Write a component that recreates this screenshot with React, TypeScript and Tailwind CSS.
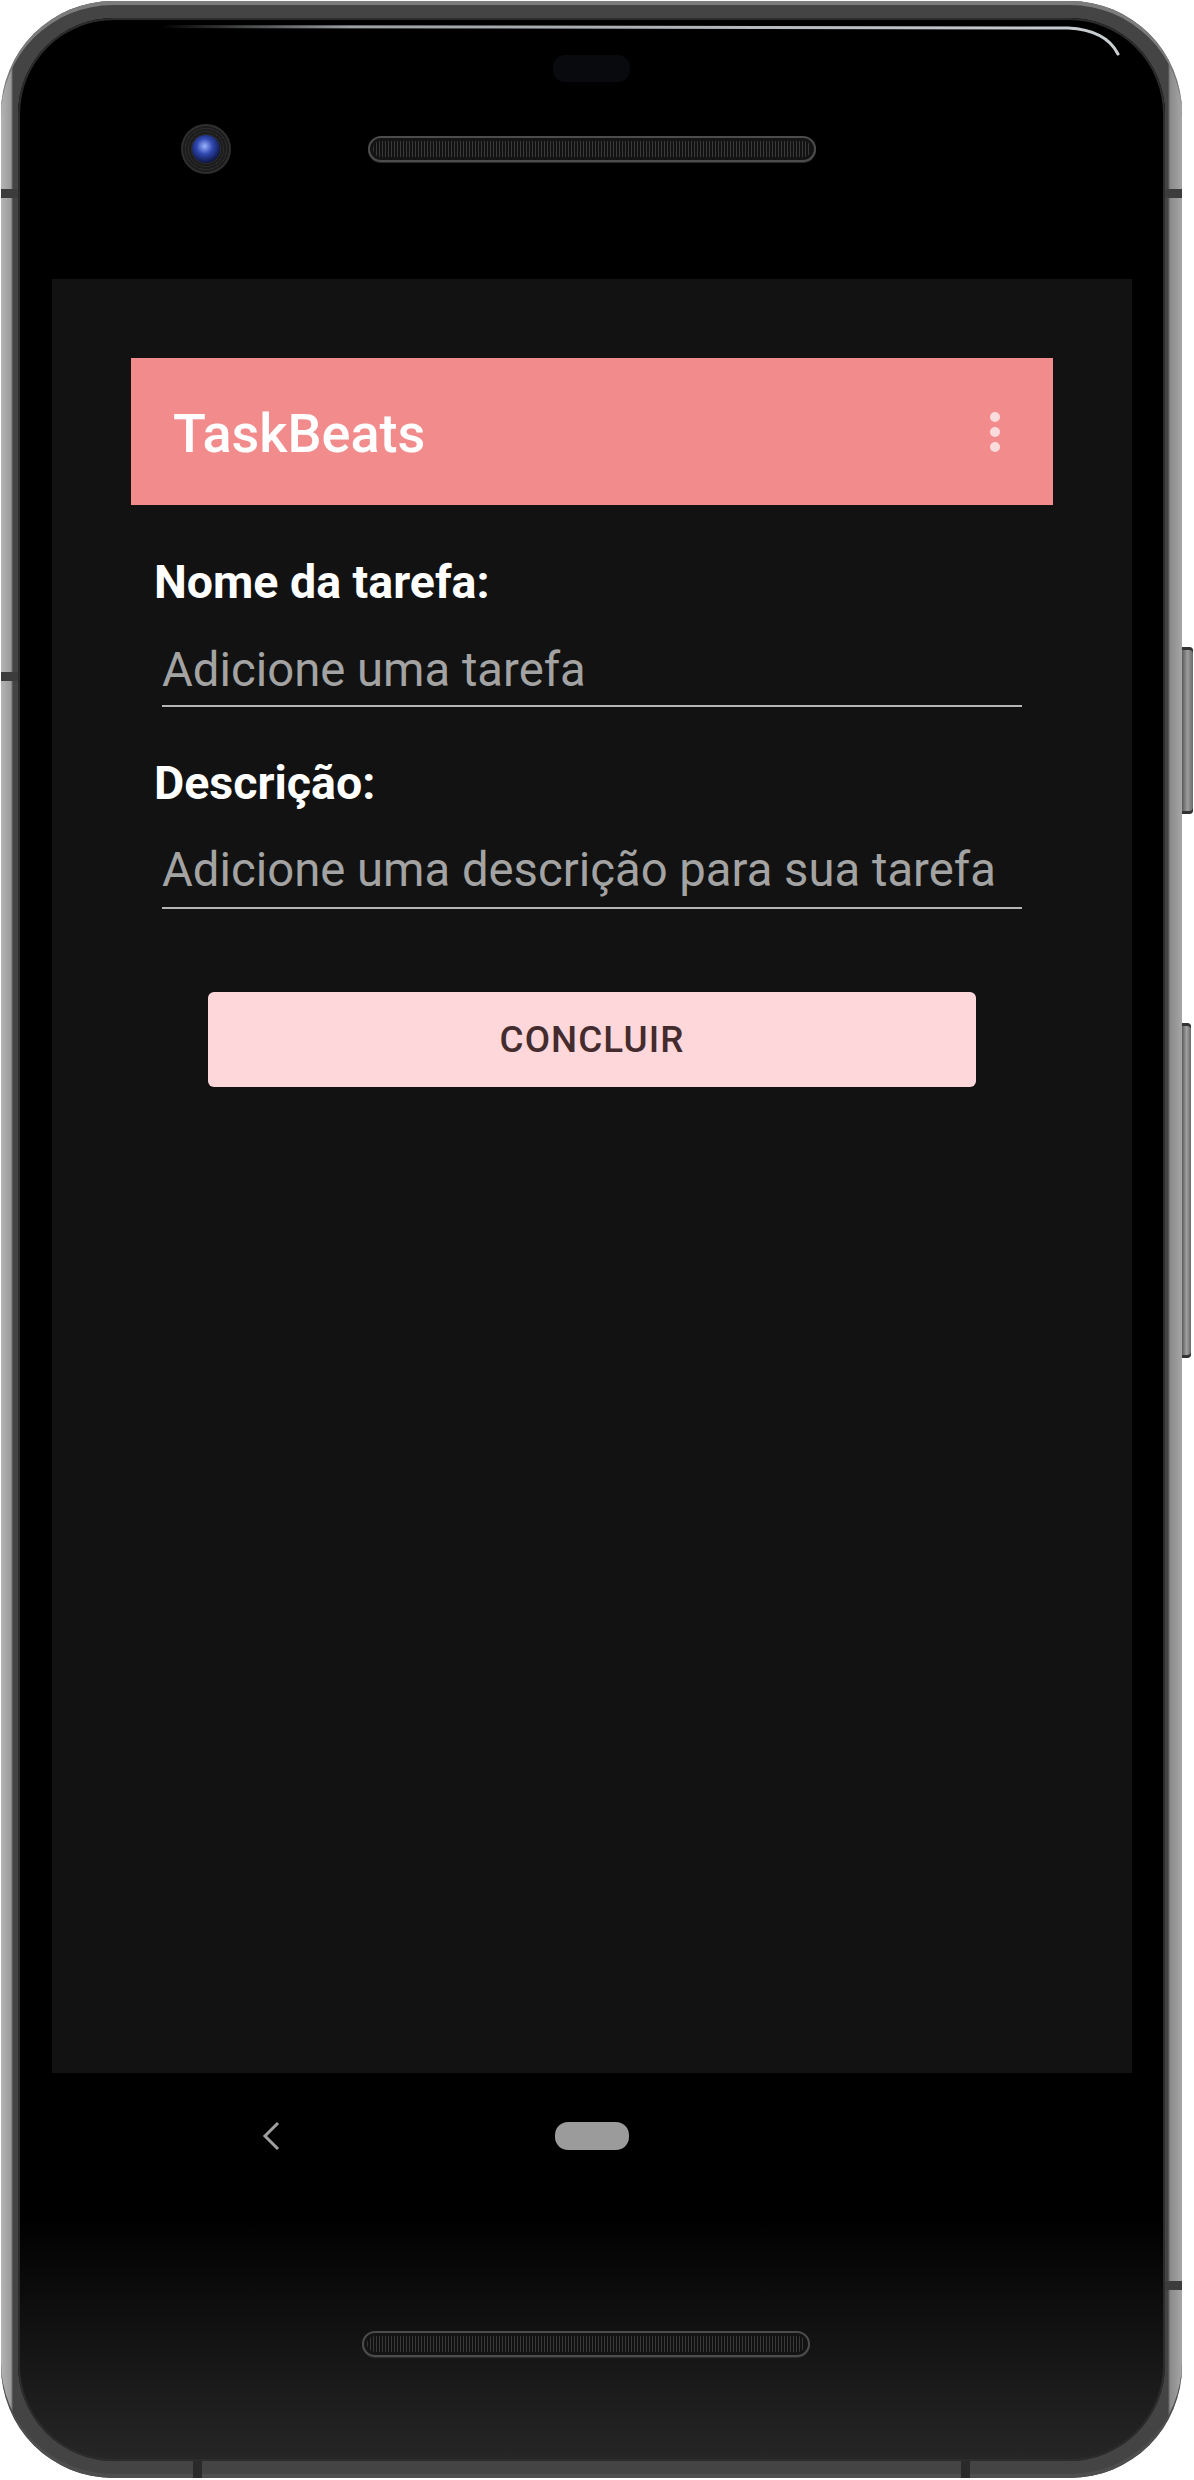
import React from 'react'

const Dot = () => <span className="block w-[10px] h-[10px] rounded-full bg-[#fbdcdc]" />

const Speaker = ({ className }: { className: string }) => (
  <div
    className={`h-[26px] w-[448px] rounded-full border-2 border-[#4c4c4c] bg-[#141414] p-[3px] shadow-[0_1px_0_#2a2a2a] ${className}`}
  >
    <div className="h-full w-full rounded-full bg-[repeating-linear-gradient(90deg,#3a3a3a_0px,#3a3a3a_1px,#121212_1px,#121212_3px)]" />
  </div>
)

export default function App() {
  return (
    <div className="w-[1194px] h-[2480px] bg-white overflow-hidden font-['Roboto',sans-serif]">
      <div className="flex pt-[1px] pl-[1px]">
        {/* phone body */}
        <div className="relative w-[1181px] h-[2477px] rounded-[112px] p-[17px] bg-[linear-gradient(to_right,#b4b4b4_0px,#9a9a9a_10px,#444_12px,#444_calc(100%_-_14px),#8a8a8a_calc(100%_-_12px),#a6a6a6_100%)] shadow-[inset_0_4px_0_#7c7c7c,inset_0_-4px_0_#4e4e4e]">
          {/* antenna lines */}
          <span className="absolute left-0 top-[188px] h-[9px] w-[18px] bg-[#3c3c3c]" />
          <span className="absolute left-0 top-[671px] h-[9px] w-[18px] bg-[#3c3c3c]" />
          <span className="absolute right-0 top-[188px] h-[9px] w-[18px] bg-[#3c3c3c]" />
          <span className="absolute right-0 top-[2280px] h-[9px] w-[18px] bg-[#3c3c3c]" />
          <span className="absolute bottom-0 left-[192px] h-[18px] w-[9px] bg-[#2a2a2a]" />
          <span className="absolute bottom-0 left-[960px] h-[18px] w-[9px] bg-[#2a2a2a]" />

          <div className="relative flex h-full w-full flex-col overflow-hidden rounded-[96px] bg-[linear-gradient(to_bottom,#000_0%,#000_90%,#262626_100%)] shadow-[inset_0_0_0_2px_#2c2c2c]">
            {/* glass glare */}
            <svg className="pointer-events-none absolute left-0 top-0" width="1146" height="60" viewBox="0 0 1146 60">
              <defs>
                <linearGradient id="glare" x1="0" y1="0" x2="1" y2="0">
                  <stop offset="0" stopColor="#cfd6da" stopOpacity="0" />
                  <stop offset="0.2" stopColor="#cfd6da" stopOpacity="0.75" />
                  <stop offset="1" stopColor="#d4dadd" stopOpacity="0.95" />
                </linearGradient>
              </defs>
              <path d="M142 8.5 L1050 10 Q1088 12 1100 36" fill="none" stroke="url(#glare)" strokeWidth="3" strokeLinecap="round" />
            </svg>

            {/* top bezel */}
            <div className="flex h-[261px] flex-col">
              <div className="ml-[535px] mt-[37px] h-[27px] w-[77px] rounded-[12px] bg-[#080a0e]" />
              <div className="mt-[42px] flex h-[50px] items-center">
                <div className="ml-[163px] flex h-[50px] w-[50px] items-center justify-center rounded-full border-2 border-[#2e2e2e] bg-[repeating-radial-gradient(circle,#1c1c1c_0px,#1c1c1c_2px,#2a2a2a_2px,#2a2a2a_3px)]">
                  <div className="h-[28px] w-[28px] rounded-full bg-[radial-gradient(circle_at_45%_40%,#9cb4ff_0%,#3048b0_35%,#0c1440_75%)]" />
                </div>
                <Speaker className="ml-[137px]" />
              </div>
            </div>

            {/* screen */}
            <div className="ml-[34px] flex h-[1794px] w-[1080px] flex-col bg-[#121212] px-[79px] pt-[79px]">
              <div className="flex h-[147px] items-center justify-between bg-[#f28b8c] pl-[42px] pr-[53px]">
                <span className="pt-[4px] text-[54px] font-medium leading-none text-white">TaskBeats</span>
                <div className="flex flex-col gap-[5px]">
                  <Dot />
                  <Dot />
                  <Dot />
                </div>
              </div>

              <label className="ml-[23px] mt-[51px] block text-[46.5px] font-bold leading-[52px] text-white">
                Nome da tarefa:
              </label>
              <div className="mx-auto mt-[34px] w-[860px]">
                <input
                  className="block h-[56px] w-full bg-transparent p-0 text-[47.25px] leading-[56px] text-white outline-none placeholder:text-[#a3a3a3]"
                  placeholder="Adicione uma tarefa"
                />
                <div className="mt-[7px] h-[2px] bg-[#b5b5b5]" />
              </div>

              <label className="ml-[23px] mt-[50px] block text-[46.5px] font-bold leading-[52px] text-white">
                Descrição:
              </label>
              <div className="mx-auto mt-[33px] w-[860px]">
                <input
                  className="block h-[56px] w-full bg-transparent p-0 text-[47.25px] leading-[56px] text-white outline-none placeholder:text-[#a3a3a3]"
                  placeholder="Adicione uma descrição para sua tarefa"
                />
                <div className="mt-[9px] h-[2px] bg-[#b5b5b5]" />
              </div>

              <button className="mx-auto mt-[83px] flex h-[95px] w-[768px] items-center justify-center rounded-[6px] bg-[#fed7db] text-[36.75px] font-medium tracking-[0.03em] text-[#442c2e]">
                CONCLUIR
              </button>
            </div>

            {/* nav bar */}
            <div className="ml-[34px] flex h-[126px] w-[1080px] items-center">
              <svg className="ml-[209px]" width="20" height="30" viewBox="0 0 20 30">
                <path d="M17 2 L4 15 L17 28" fill="none" stroke="#a0a0a0" strokeWidth="3" />
              </svg>
              <div className="ml-[274px] h-[28px] w-[74px] rounded-[13px] bg-[#9b9b9b]" />
            </div>

            <Speaker className="ml-[344px] mt-[132px]" />
          </div>
        </div>

        {/* side buttons */}
        <div className="flex flex-col">
          <div className="mt-[646px] h-[167px] w-[11px] rounded-r-[4px] bg-[linear-gradient(to_right,#5a5a5a,#9c9c9c_50%,#6a6a6a)] shadow-[inset_0_3px_0_#333,inset_0_-3px_0_#333]" />
          <div className="mt-[209px] h-[335px] w-[9px] rounded-r-[4px] bg-[linear-gradient(to_right,#5a5a5a,#a0a0a0_50%,#6a6a6a)] shadow-[inset_0_3px_0_#333,inset_0_-3px_0_#333]" />
        </div>
      </div>
    </div>
  )
}
